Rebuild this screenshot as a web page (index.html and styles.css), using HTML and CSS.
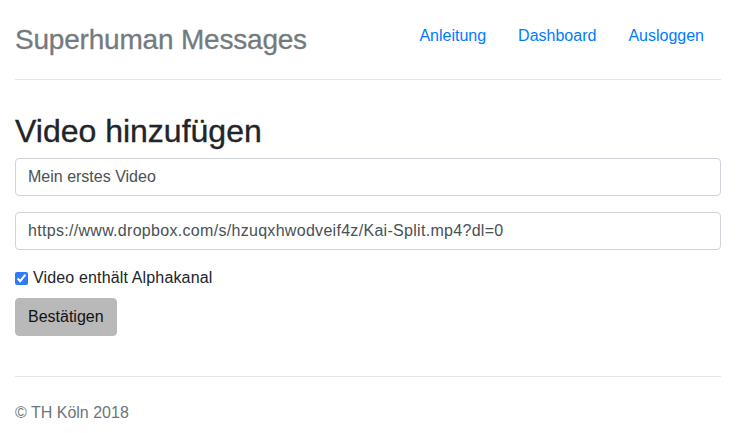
FILE: index.html
```html
<!DOCTYPE html>
<html lang="de">
<head>
<meta charset="utf-8">
<title>Superhuman Messages</title>
<link rel="stylesheet" href="styles.css">
</head>
<body>
<div class="container">
  <header class="site-header">
    <a class="brand" href="#">Superhuman Messages</a>
    <nav class="nav">
      <a class="nav-link" href="#">Anleitung</a>
      <a class="nav-link" href="#">Dashboard</a>
      <a class="nav-link" href="#">Ausloggen</a>
    </nav>
  </header>
  <main class="main">
    <h2 class="page-title">Video hinzufügen</h2>
    <form class="form">
      <div class="form-group">
        <input class="form-control" type="text" value="Mein erstes Video">
      </div>
      <div class="form-group">
        <input class="form-control url-input" type="text" value="https://www.dropbox.com/s/hzuqxhwodveif4z/Kai-Split.mp4?dl=0">
      </div>
      <label class="check-row">
        <input class="check" type="checkbox" checked>
        <span class="check-label">Video enthält Alphakanal</span>
      </label>
      <button class="btn" type="button">Bestätigen</button>
    </form>
  </main>
  <footer class="site-footer">© TH Köln 2018</footer>
</div>
</body>
</html>
```

FILE: styles.css
```css
* { box-sizing: border-box; }
html, body { margin: 0; padding: 0; background: #fff; }
body {
  font-family: "Liberation Sans", Arial, sans-serif;
  font-size: 16px;
  line-height: 24px;
  color: #212529;
}
.container {
  padding: 0 17px 0 15px;
}
.site-header {
  display: flex;
  align-items: flex-start;
  justify-content: space-between;
  height: 80px;
  border-bottom: 1px solid #e5e5e5;
}
.brand {
  margin-top: 23px;
  font-size: 28px;
  line-height: 34px;
  letter-spacing: -0.2px;
  color: #737b80;
  -webkit-text-stroke: 0.3px #737b80;
  text-decoration: none;
}
.nav {
  display: flex;
  margin-top: 16px;
  margin-right: 1px;
}
.nav-link {
  padding: 8px 16px;
  color: #007bff;
  text-decoration: none;
  line-height: 24px;
}
.main {
  padding-top: 33px;
}
.page-title {
  margin: 0 0 8px;
  font-size: 32px;
  line-height: 37px;
  font-weight: 500;
  color: #212529;
  -webkit-text-stroke: 0.35px #212529;
}
.form { display: flex; flex-direction: column; align-items: flex-start; }
.form-group { margin-bottom: 16px; width: 100%; }
.form-control {
  display: block;
  width: 100%;
  height: 38px;
  padding: 6px 12px;
  font-family: inherit;
  font-size: 16px;
  line-height: 24px;
  color: #495057;
  background: #fff;
  border: 1px solid #ced4da;
  border-radius: 4px;
  outline: none;
}
.url-input { letter-spacing: 0.3px; }
.check-row {
  display: flex;
  align-items: center;
  height: 24px;
  margin-bottom: 8px;
}
.check-label { letter-spacing: 0.15px; }
.check {
  width: 13px;
  height: 13px;
  margin: 1px 5px 0 0;
  accent-color: #2f7df6;
}
.btn {
  height: 38px;
  padding: 6px 12px;
  font-family: inherit;
  font-size: 16px;
  line-height: 24px;
  color: #111;
  background: #b9b9b9;
  border: 1px solid #b9b9b9;
  border-radius: 4px;
}
.site-footer {
  margin-top: 40px;
  border-top: 1px solid #e5e5e5;
  padding-top: 24px;
  color: #6c757d;
}
```
